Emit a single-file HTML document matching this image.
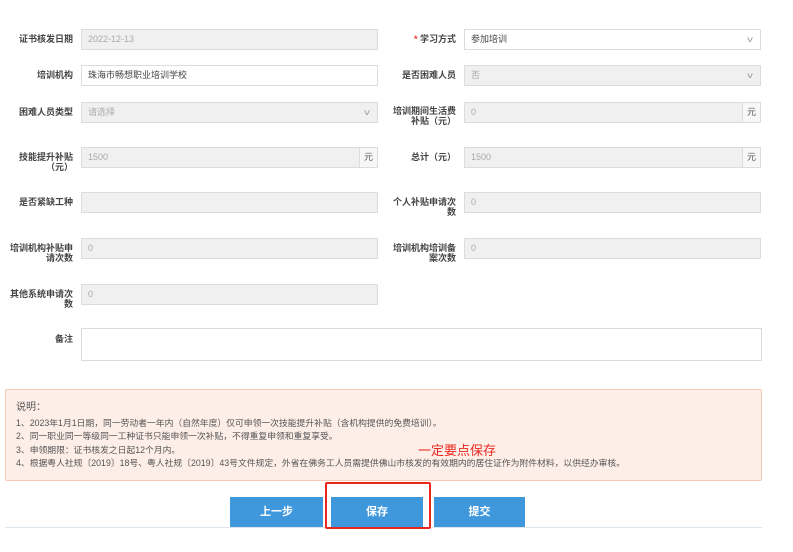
<!DOCTYPE html>
<html><head><meta charset="utf-8"><style>
body{margin:0;width:793px;height:552px;background:#fff;position:relative;overflow:hidden;font-family:"Liberation Sans","Noto Sans CJK SC",sans-serif;}
.l{position:absolute;font-size:9px;color:#444;font-weight:bold;text-align:right;line-height:10px;}
.i{position:absolute;box-sizing:border-box;height:21px;border:1px solid #dcdcdc;background:#f0f0f0;font-size:9px;color:#aaa;padding:0 6px;line-height:19px;}
.w{background:#fff;color:#444;}
.u{position:absolute;right:-1px;top:-1px;width:19px;height:21px;border:1px solid #dcdcdc;background:#f7f7f7;color:#555;text-align:center;line-height:19px;box-sizing:border-box;font-size:9px;}
.c{position:absolute;right:8px;top:0;font-size:8px;color:#999;transform:scaleX(1.4);}
.b{position:absolute;top:497px;height:30px;background:#3f97dc;color:#fff;font-size:11px;font-weight:bold;text-align:center;line-height:30px;}
</style></head><body>
<div class="l" style="left:0;width:73px;top:34px">证书核发日期</div>
<div class="i" style="left:81px;top:29px;width:297px">2022-12-13</div>
<div class="l" style="left:380px;width:76px;top:34px"><span style="color:#e33">*</span> 学习方式</div>
<div class="i w" style="left:464px;top:29px;width:297px">参加培训<span class="c">v</span></div>

<div class="l" style="left:0;width:73px;top:70px">培训机构</div>
<div class="i w" style="left:81px;top:65px;width:297px">珠海市畅想职业培训学校</div>
<div class="l" style="left:380px;width:76px;top:70px">是否困难人员</div>
<div class="i" style="left:464px;top:65px;width:297px">否<span class="c">v</span></div>

<div class="l" style="left:0;width:73px;top:107px">困难人员类型</div>
<div class="i" style="left:81px;top:102px;width:297px">请选择<span class="c">v</span></div>
<div class="l" style="left:380px;width:76px;top:106px">培训期间生活费<br>补贴（元）</div>
<div class="i" style="left:464px;top:102px;width:297px">0<span class="u">元</span></div>

<div class="l" style="left:0;width:73px;top:152px">技能提升补贴<br>（元）</div>
<div class="i" style="left:81px;top:147px;width:297px">1500<span class="u">元</span></div>
<div class="l" style="left:380px;width:76px;top:152px">总计（元）</div>
<div class="i" style="left:464px;top:147px;width:297px">1500<span class="u">元</span></div>

<div class="l" style="left:0;width:73px;top:197px">是否紧缺工种</div>
<div class="i" style="left:81px;top:192px;width:297px"></div>
<div class="l" style="left:380px;width:76px;top:197px">个人补贴申请次<br>数</div>
<div class="i" style="left:464px;top:192px;width:297px">0</div>

<div class="l" style="left:0;width:73px;top:243px">培训机构补贴申<br>请次数</div>
<div class="i" style="left:81px;top:238px;width:297px">0</div>
<div class="l" style="left:380px;width:76px;top:243px">培训机构培训备<br>案次数</div>
<div class="i" style="left:464px;top:238px;width:297px">0</div>

<div class="l" style="left:0;width:73px;top:289px">其他系统申请次<br>数</div>
<div class="i" style="left:81px;top:284px;width:297px">0</div>

<div class="l" style="left:0;width:73px;top:334px">备注</div>
<div class="i w" style="left:81px;top:328px;width:681px;height:33px"></div>

<div style="position:absolute;left:5px;top:389px;width:757px;height:92px;box-sizing:border-box;background:#fdeee8;border:1px solid #f6c8b6;border-radius:2px;padding:11px 10px;color:#555;font-size:8.8px;line-height:13.2px;white-space:nowrap">
<div style="font-size:10px;margin-bottom:3px">说明：</div>
1、2023年1月1日期，同一劳动者一年内（自然年度）仅可申领一次技能提升补贴（含机构提供的免费培训）。<br>
2、同一职业同一等级同一工种证书只能申领一次补贴，不得重复申领和重复享受。<br>
3、申领期限：证书核发之日起12个月内。<br>
4、根据粤人社规〔2019〕18号、粤人社规〔2019〕43号文件规定，外省在佛务工人员需提供佛山市核发的有效期内的居住证作为附件材料，以供经办审核。
</div>
<div style="position:absolute;left:418px;top:440px;font-size:13px;color:#e8271f">一定要点保存</div>
<div style="position:absolute;left:5px;top:527px;width:757px;height:1px;background:#dde6ee"></div>
<div class="b" style="left:230px;width:93px">上一步</div>
<div class="b" style="left:331px;width:92px">保存</div>
<div class="b" style="left:434px;width:91px">提交</div>
<div style="position:absolute;left:325px;top:482px;width:106px;height:47px;box-sizing:border-box;border:2px solid #e8271f;border-radius:2px"></div>
</body></html>
